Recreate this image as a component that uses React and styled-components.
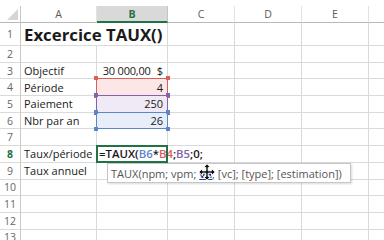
import React from "react";
import styled, { createGlobalStyle } from "styled-components";

const GlobalStyle = createGlobalStyle`
  html, body {
    margin: 0;
    padding: 0;
    background: #ffffff;
    overflow: hidden;
  }
  body {
    font-family: "Open Sans", "Liberation Sans", sans-serif;
  }
`;

const GREEN = "#217346";
const GRID = "#dadada";

const COLS = ["A", "B", "C", "D", "E"];

const Page = styled.div`
  width: 384px;
  height: 240px;
  padding-top: 6px;
  box-sizing: border-box;
  position: relative;
  overflow: hidden;
`;

const Sheet = styled.div`
  display: grid;
  grid-template-columns: 21px 76px 71px 67px 67px 67px 67px;
  grid-template-rows: 17px 23px repeat(12, 16.7px);
`;

const Corner = styled.div`
  position: relative;
  border-right: 1px solid #c8c8c8;
  border-bottom: 1px solid #b8b8b8;
  &::after {
    content: "";
    position: absolute;
    right: 2px;
    bottom: 2px;
    width: 0;
    height: 0;
    border-left: 11px solid transparent;
    border-bottom: 11px solid #d6d6d6;
  }
`;

const ColHead = styled.div`
  display: flex;
  align-items: center;
  justify-content: center;
  font-size: 10.5px;
  color: ${({ $active }) => ($active ? GREEN : "#5a5a5a")};
  font-weight: ${({ $active }) => ($active ? 700 : 400)};
  background: ${({ $active }) => ($active ? "#d9d9d9" : "#ffffff")};
  border-right: 1px solid ${({ $active }) => ($active ? "#c4c4c4" : "#e2e2e2")};
  border-bottom: ${({ $active }) => ($active ? `2px solid ${GREEN}` : "1px solid #b8b8b8")};
  box-sizing: border-box;
`;

const RowHead = styled.div`
  display: flex;
  align-items: center;
  justify-content: center;
  font-size: 10.5px;
  color: ${({ $active }) => ($active ? GREEN : "#666666")};
  font-weight: ${({ $active }) => ($active ? 700 : 400)};
  border-right: 1px solid #c8c8c8;
  border-bottom: 1px solid ${GRID};
  box-sizing: border-box;
`;

const Cell = styled.div`
  position: relative;
  display: flex;
  align-items: center;
  justify-content: ${({ $align }) => ($align === "right" ? "flex-end" : "flex-start")};
  gap: 6px;
  padding: 0 ${({ $align }) => ($align === "right" ? "4px" : "3px")};
  font-size: 11px;
  color: #1a1a1a;
  white-space: nowrap;
  overflow: visible;
  background: ${({ $fill }) => $fill || "#ffffff"};
  border-right: 1px solid ${GRID};
  border-bottom: 1px solid ${GRID};
  box-sizing: border-box;
  z-index: ${({ $edit, $range }) => ($edit ? 3 : $range ? 2 : 1)};

  ${({ $range }) =>
    $range &&
    `
    &::after {
      content: "";
      position: absolute;
      top: -1px;
      left: -1px;
      right: -1px;
      bottom: -1px;
      border: 1px solid ${$range};
      pointer-events: none;
    }
  `}

  ${({ $edit }) =>
    $edit &&
    `
    &::after {
      content: "";
      position: absolute;
      top: -1px;
      left: -1px;
      right: -1px;
      bottom: -1px;
      border: 2px solid ${GREEN};
      pointer-events: none;
    }
  `}
`;

const TitleCell = styled(Cell)`
  grid-column: span 2;
  font-size: 16.8px;
  font-weight: 700;
  padding-left: 3px;
  padding-top: 1px;
`;

const Money = styled.span`
  letter-spacing: -0.2px;
`;

const Handle = styled.span`
  position: absolute;
  width: 4px;
  height: 4px;
  background: ${({ $color }) => $color};
  top: ${({ $v }) => ($v === "top" ? "-3px" : "auto")};
  bottom: ${({ $v }) => ($v === "bottom" ? "-3px" : "auto")};
  left: ${({ $h }) => ($h === "left" ? "-3px" : "auto")};
  right: ${({ $h }) => ($h === "right" ? "-3px" : "auto")};
  z-index: 4;
`;

const Formula = styled.span`
  font-weight: 600;
  font-size: 11.4px;
  color: #1a1a1a;
  margin-left: -1px;
`;

const Ref = styled.span`
  color: ${({ $color }) => $color};
`;

const Tooltip = styled.div`
  position: absolute;
  left: 107px;
  top: 163px;
  height: 18px;
  padding: 0 8px 0 3px;
  display: flex;
  align-items: center;
  background: #ffffff;
  border: 1px solid #c6c6c6;
  box-shadow: 1px 1px 2px rgba(0, 0, 0, 0.15);
  font-size: 11px;
  color: #555555;
  white-space: nowrap;
  z-index: 10;
`;

const Current = styled.span`
  color: #2b3f8f;
  font-weight: 700;
  text-decoration: underline;
`;

const MoveCursor = styled.svg`
  position: absolute;
  left: 198px;
  top: 163px;
  z-index: 11;
`;

const RANGES = {
  4: { color: "#d9605a", fill: "#fce6e6" },
  5: { color: "#8064a8", fill: "#efeaf6" },
  6: { color: "#5b87c8", fill: "#e7eef9" },
};

const LABELS = {
  3: "Objectif",
  4: "Période",
  5: "Paiement",
  6: "Nbr par an",
  8: "Taux/période",
  9: "Taux annuel",
};

const VALUES = {
  4: "4",
  5: "250",
  6: "26",
};

function RangeHandles({ color }) {
  return (
    <>
      <Handle $color={color} $v="top" $h="left" />
      <Handle $color={color} $v="top" $h="right" />
      <Handle $color={color} $v="bottom" $h="left" />
      <Handle $color={color} $v="bottom" $h="right" />
    </>
  );
}

function BCell({ row }) {
  const range = RANGES[row];
  if (range) {
    return (
      <Cell $align="right" $range={range.color} $fill={range.fill}>
        {VALUES[row]}
        <RangeHandles color={range.color} />
      </Cell>
    );
  }
  if (row === 3) {
    return (
      <Cell $align="right">
        <Money>30 000,00</Money>
        <span>$</span>
      </Cell>
    );
  }
  if (row === 8) {
    return (
      <Cell $edit>
        <Formula>
          =TAUX(<Ref $color="#5b87c8">B6</Ref>*<Ref $color="#d9605a">B4</Ref>;
          <Ref $color="#8064a8">B5</Ref>;0;
        </Formula>
      </Cell>
    );
  }
  return <Cell />;
}

export default function App() {
  const rows = Array.from({ length: 12 }, (_, i) => i + 2);
  return (
    <Page>
      <GlobalStyle />
      <Sheet>
        <Corner />
        {COLS.map((c) => (
          <ColHead key={c} $active={c === "B"}>
            {c}
          </ColHead>
        ))}
        <ColHead />

        <RowHead>1</RowHead>
        <TitleCell>Excercice TAUX()</TitleCell>
        <Cell />
        <Cell />
        <Cell />
        <Cell />

        {rows.map((r) => (
          <React.Fragment key={r}>
            <RowHead $active={r === 8}>{r}</RowHead>
            <Cell>{LABELS[r] || ""}</Cell>
            <BCell row={r} />
            <Cell />
            <Cell />
            <Cell />
            <Cell />
          </React.Fragment>
        ))}
      </Sheet>

      <Tooltip>
        TAUX(npm; vpm;&nbsp;<Current>va</Current>; [vc]; [type]; [estimation])
      </Tooltip>

      <MoveCursor width="18" height="18" viewBox="0 0 18 18">
        <polygon
          points="9,0.8 12.6,4.4 10.2,4.4 10.2,7.8 13.6,7.8 13.6,5.4 17.2,9 13.6,12.6 13.6,10.2 10.2,10.2 10.2,13.6 12.6,13.6 9,17.2 5.4,13.6 7.8,13.6 7.8,10.2 4.4,10.2 4.4,12.6 0.8,9 4.4,5.4 4.4,7.8 7.8,7.8 7.8,4.4 5.4,4.4"
          fill="#111111"
          stroke="#ffffff"
          strokeWidth="1"
          strokeLinejoin="miter"
        />
      </MoveCursor>
    </Page>
  );
}
